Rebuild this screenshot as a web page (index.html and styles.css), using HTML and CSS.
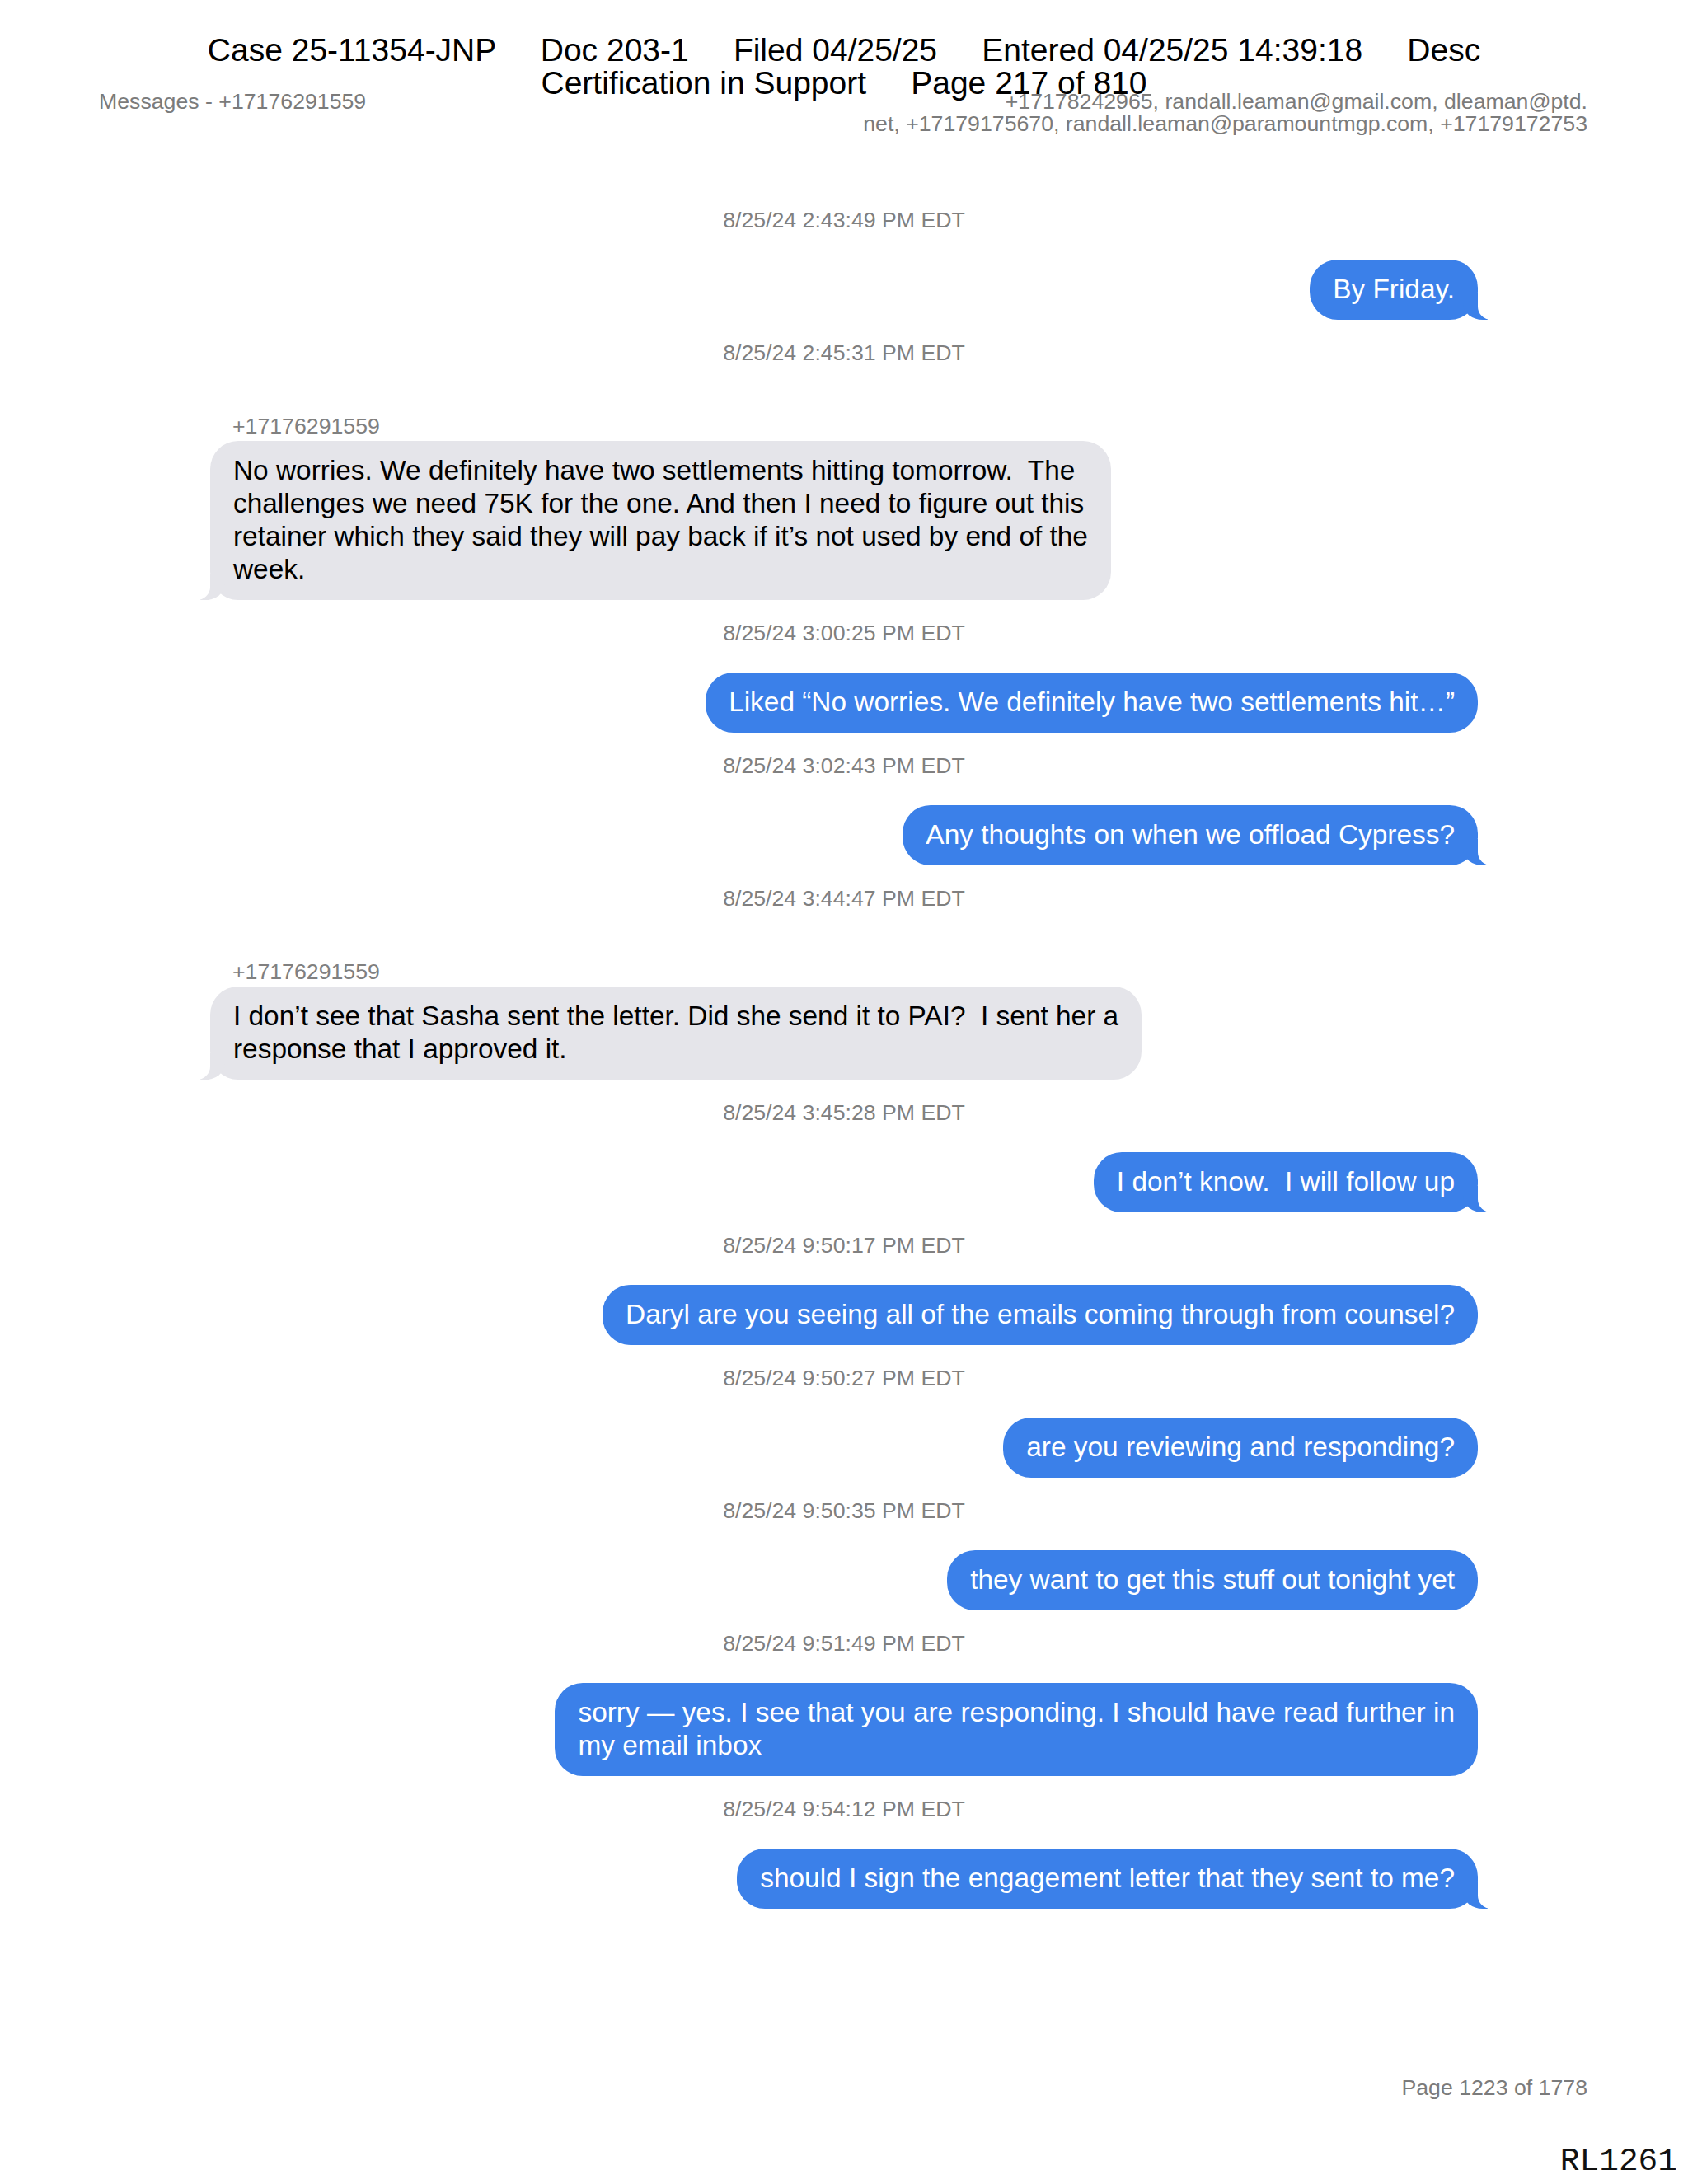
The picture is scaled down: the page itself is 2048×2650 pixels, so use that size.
FILE: index.html
```
<!DOCTYPE html>
<html lang="en">
<head>
<meta charset="utf-8">
<title>Messages - +17176291559</title>
<link rel="stylesheet" href="styles.css">
</head>
<body>
<div class="page">
  <div class="court-stamp">
    <div class="stamp-line">Case 25-11354-JNP     Doc 203-1     Filed 04/25/25     Entered 04/25/25 14:39:18     Desc</div>
    <div class="stamp-line">Certification in Support     Page 217 of 810</div>
  </div>

  <header class="conv-header">
    <div class="conv-title">Messages - +17176291559</div>
    <div class="conv-participants">+17178242965, randall.leaman@gmail.com, dleaman@ptd.<br>net, +17179175670, randall.leaman@paramountmgp.com, +17179172753</div>
  </header>

  <main class="thread">
    <div class="ts first">8/25/24 2:43:49 PM EDT</div>
    <div class="msg sent"><div class="bubble sent">By Friday.</div></div>

    <div class="ts">8/25/24 2:45:31 PM EDT</div>
    <div class="msg recv">
      <div class="sender">+17176291559</div>
      <div class="bubble recv">No worries. We definitely have two settlements hitting tomorrow.  The<br>challenges we need 75K for the one. And then I need to figure out this<br>retainer which they said they will pay back if it’s not used by end of the<br>week.</div>
    </div>

    <div class="ts">8/25/24 3:00:25 PM EDT</div>
    <div class="msg sent"><div class="bubble sent plain">Liked “No worries. We definitely have two settlements hit…”</div></div>

    <div class="ts">8/25/24 3:02:43 PM EDT</div>
    <div class="msg sent"><div class="bubble sent">Any thoughts on when we offload Cypress?</div></div>

    <div class="ts">8/25/24 3:44:47 PM EDT</div>
    <div class="msg recv">
      <div class="sender">+17176291559</div>
      <div class="bubble recv">I don’t see that Sasha sent the letter. Did she send it to PAI?  I sent her a<br>response that I approved it.</div>
    </div>

    <div class="ts">8/25/24 3:45:28 PM EDT</div>
    <div class="msg sent"><div class="bubble sent">I don’t know.  I will follow up</div></div>

    <div class="ts">8/25/24 9:50:17 PM EDT</div>
    <div class="msg sent"><div class="bubble sent plain">Daryl are you seeing all of the emails coming through from counsel?</div></div>

    <div class="ts">8/25/24 9:50:27 PM EDT</div>
    <div class="msg sent"><div class="bubble sent plain">are you reviewing and responding?</div></div>

    <div class="ts">8/25/24 9:50:35 PM EDT</div>
    <div class="msg sent"><div class="bubble sent plain">they want to get this stuff out tonight yet</div></div>

    <div class="ts">8/25/24 9:51:49 PM EDT</div>
    <div class="msg sent"><div class="bubble sent plain">sorry — yes. I see that you are responding. I should have read further in<br>my email inbox</div></div>

    <div class="ts">8/25/24 9:54:12 PM EDT</div>
    <div class="msg sent"><div class="bubble sent">should I sign the engagement letter that they sent to me?</div></div>
  </main>

  <footer class="page-num">Page 1223 of 1778</footer>

  <div class="bates">RL1261</div>
</div>
</body>
</html>
```
FILE: styles.css
```
html, body {
  margin: 0;
  padding: 0;
  background: #ffffff;
}

.page {
  position: relative;
  width: 2048px;
  min-height: 2650px;
  font-family: "Liberation Sans", Arial, Helvetica, sans-serif;
  color: #000;
}

/* Court filing stamp overlaid on the page */
.court-stamp {
  position: absolute;
  top: 41px;
  left: 0;
  width: 2048px;
  text-align: center;
  font-size: 39px;
  line-height: 40px;
  color: #000;
}

.stamp-line {
  white-space: pre;
}

/* Conversation header */
.conv-header {
  display: flex;
  justify-content: space-between;
  align-items: flex-start;
  padding: 110px 122px 0 120px;
  font-size: 26.7px;
  line-height: 27px;
  color: #7b7b7b;
}

.conv-participants {
  text-align: right;
}

/* Thread */
.thread {
  display: flex;
  flex-direction: column;
  width: 1538px;
  margin: 88px 0 0 255px;
}

.ts {
  align-self: center;
  font-size: 26.7px;
  line-height: 30px;
  color: #808080;
  margin-top: 25px;
}

.ts.first {
  margin-top: 0;
}

.msg {
  display: flex;
  flex-direction: column;
  margin-top: 33px;
}

.msg.sent {
  align-items: flex-end;
}

.msg.recv {
  align-items: flex-start;
  margin-top: 59px;
}

.sender {
  font-size: 26.7px;
  line-height: 30px;
  color: #808080;
  padding-left: 27px;
  margin-bottom: 3px;
}

.bubble {
  position: relative;
  font-size: 33.4px;
  line-height: 40px;
  padding: 16px 28px 17px;
  border-radius: 34px;
  white-space: pre-wrap;
}

.bubble.sent {
  background: #3b80e9;
  color: #ffffff;
}

.bubble.recv {
  background: #e5e5ea;
  color: #000000;
}

/* tails */
.bubble.sent:not(.plain)::before,
.bubble.sent:not(.plain)::after,
.bubble.recv::before,
.bubble.recv::after {
  content: "";
  position: absolute;
  bottom: 0;
  height: 32px;
}

.bubble.sent:not(.plain)::before {
  right: -12px;
  width: 30px;
  background: #3b80e9;
  border-bottom-left-radius: 24px 20px;
}

.bubble.sent:not(.plain)::after {
  right: -40px;
  width: 40px;
  background: #ffffff;
  border-bottom-left-radius: 16px;
}

.bubble.recv::before {
  left: -12px;
  width: 30px;
  background: #e5e5ea;
  border-bottom-right-radius: 24px 20px;
}

.bubble.recv::after {
  left: -40px;
  width: 40px;
  background: #ffffff;
  border-bottom-right-radius: 16px;
}

/* footer */
.page-num {
  margin-top: 202px;
  padding-right: 122px;
  text-align: right;
  font-size: 26.7px;
  line-height: 30px;
  color: #7b7b7b;
}

.bates {
  position: absolute;
  top: 2603px;
  right: 13px;
  font-family: "Liberation Mono", "Courier New", monospace;
  font-size: 39.5px;
  line-height: 40px;
  color: #111;
}
```
